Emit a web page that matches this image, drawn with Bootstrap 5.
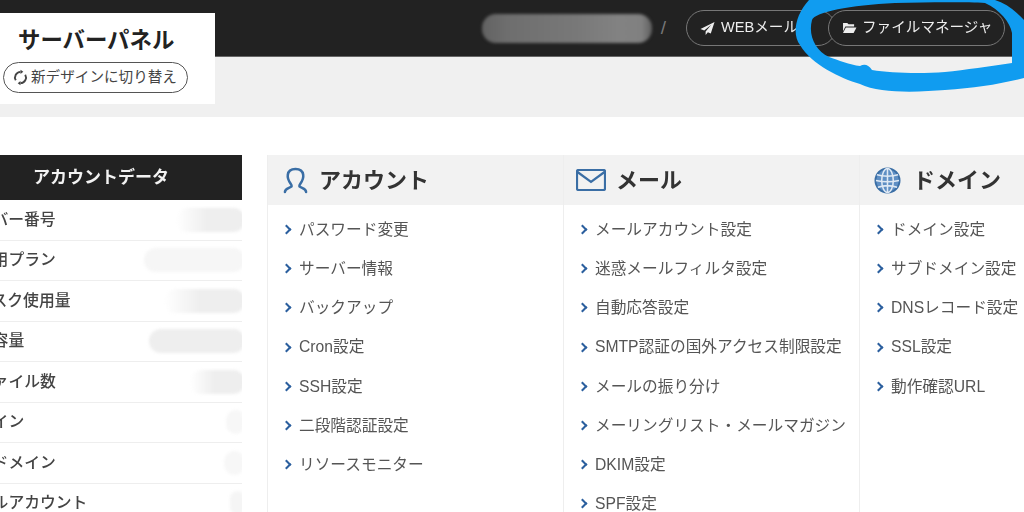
<!DOCTYPE html>
<html lang="ja"><head><meta charset="utf-8">
<link rel="stylesheet" href="https://cdn.jsdelivr.net/npm/bootstrap@5.3.0/dist/css/bootstrap.min.css">
<style>
html,body{height:512px;overflow:hidden}
body{font-family:"Liberation Sans","Noto Sans CJK JP",sans-serif;background:#fff;color:#444;position:relative;width:1024px;filter:blur(.35px)}
.topbar{height:57px;background:#222;border-bottom:1px solid #666;padding-right:19px}
.band{height:60px;background:#f0f0f0}
.logobox{position:absolute;left:0;top:13px;width:215px;height:91px;background:#fff;padding:13px 0 0 18px}
.logotitle{font-size:22.4px;font-weight:700;color:#222;line-height:30px}
.switchbtn{display:flex;align-items:center;gap:2px;position:absolute;left:3px;top:49px;width:185px;height:31px;border:1.5px solid #555;border-radius:16px;font-size:14.6px;color:#444;padding-left:8px;white-space:nowrap}
.smudge{width:170px;height:29px;border-radius:14px;background:linear-gradient(90deg,#626262,#6e6e6e 15%,#787878 55%,#828282 80%,#808080 94%,#5f5f5f);filter:blur(1.5px);margin-right:1px}
.slash{color:#777;font-size:19px;margin:0 20px 0 8px}
.pillbtn{display:inline-flex;align-items:center;gap:5px;height:36px;border:1px solid #777;border-radius:18px;color:#eee;font-size:14.6px;padding:0 13px;white-space:nowrap}
.pillbtn svg,.switchbtn svg,.panehead svg{flex:none}
.pillone{width:150px;margin-right:-8px;gap:6px}
.pilltwo{width:177px;position:relative;z-index:1;background:#222}
.main{padding-top:38px}
.side{width:242px;flex:none;overflow:hidden}
.sidehead{height:45px;background:#222;color:#f2f2f2;font-weight:700;font-size:17px;display:flex;align-items:center;justify-content:center;padding:1px 40px 0 0}
.siderow{height:40.5px;border-bottom:1px solid #eee;display:flex;align-items:center;justify-content:space-between;font-size:15.8px;font-weight:500;color:#444;white-space:nowrap}
.siderow>span{margin-left:-39px;flex:none}
.blurval{height:24px;border-radius:12px 10px 10px 12px;background:linear-gradient(90deg,#fff,#eee 45%);filter:blur(1.5px);margin-right:-2px}
.val1{width:68px}.val2{width:100px;background:#f6f6f6}.val3{width:80px}.val4{width:95px;background:#eee}.val5{width:54px}.val6{width:18px;background:#f7f7f7}.val7{width:20px;background:#f7f7f7}.val8{width:14px;background:#f5f5f5}
.panels{margin-left:25px;flex:1;min-width:0}
.pane{width:296px;flex:none;border-left:1px solid #eee}
.panehead{height:50px;background:#f2f2f2;display:flex;align-items:center;gap:11px;font-size:22px;font-weight:700;color:#333;padding-left:15px}
.headmail{padding-left:12px;gap:10px}.headdomain{padding-left:14px;gap:12px}
.panelist{list-style:none;margin:0;padding:5px 0 0 15px}
.panelist li{height:39.2px;display:flex;align-items:center;gap:9px;font-size:15.7px;color:#555;white-space:nowrap}
.panelist li::before{content:"";flex:none;width:7px;height:7px;border-top:2.4px solid #2b5f9e;border-right:2.4px solid #2b5f9e;transform:rotate(45deg)}
.ring{position:absolute;left:0;top:0;width:1024px;height:512px;pointer-events:none;z-index:5}
</style></head><body>
<div class="topbar d-flex align-items-center justify-content-end">
 <div class="smudge"></div><span class="slash">/</span>
 <a class="pillbtn pillone text-decoration-none"><svg width="15" height="15" viewBox="0 0 16 15"><path d="M15.500 .5 .5 8l4 1.600L12 3.500 6 10.600V14.500l2.400-3 3.100 1.300z" fill="#eee"/></svg>WEBメール</a>
 <a class="pillbtn pilltwo text-decoration-none"><svg width="15" height="12" viewBox="0 0 16 13"><path d="M1 1h4.500l1.500 1.500h6V5H3.500L1 10z" fill="#eee"/><path d="M4 6h11.500L12.500 12H1z" fill="#eee"/></svg>ファイルマネージャ</a>
</div>
<div class="band"></div>
<div class="logobox">
 <div class="logotitle">サーバーパネル</div>
 <div class="switchbtn"><svg width="17" height="17" viewBox="0 0 18 18" fill="none" stroke="#444" stroke-width="2"><path d="M4 12A6 6 0 0 1 9 3"/><path d="M14 6a6 6 0 0 1-5 9"/><path d="M9 .8v4.600L12 3z" fill="#444" stroke="none"/><path d="M9 17.200v-4.600L6 15z" fill="#444" stroke="none"/></svg>新デザインに切り替え</div>
</div>
<div class="main d-flex">
 <div class="side">
  <div class="sidehead">アカウントデータ</div>
  <div class="siderow"><span>サーバー番号</span><div class="blurval val1"></div></div>
  <div class="siderow"><span>ご利用プラン</span><div class="blurval val2"></div></div>
  <div class="siderow"><span>ディスク使用量</span><div class="blurval val3"></div></div>
  <div class="siderow"><span>空き容量</span><div class="blurval val4"></div></div>
  <div class="siderow"><span>総ファイル数</span><div class="blurval val5"></div></div>
  <div class="siderow"><span>ドメイン</span><div class="blurval val6"></div></div>
  <div class="siderow"><span>サブドメイン</span><div class="blurval val7"></div></div>
  <div class="siderow"><span>メールアカウント</span><div class="blurval val8"></div></div>
 </div>
 <div class="panels d-flex overflow-hidden">
  <div class="pane">
   <div class="panehead"><svg width="25" height="27" viewBox="0 0 26 28" fill="none" stroke="#3a6ea5" stroke-width="2.600" stroke-linecap="round"><path d="M2 26c0-4 5-4 7-6 1-2-5-5-4-12 .5-4 4-6 8-6s7.500 2 8 6c1 7-5 10-4 12 2 2 7 2 7 6"/></svg>アカウント</div>
   <ul class="panelist"><li>パスワード変更</li><li>サーバー情報</li><li>バックアップ</li><li>Cron設定</li><li>SSH設定</li><li>二段階認証設定</li><li>リソースモニター</li></ul>
  </div>
  <div class="pane">
   <div class="panehead headmail"><svg width="30" height="22" viewBox="0 0 30 22" fill="none" stroke="#3a6ea5" stroke-width="2.200"><rect x="1" y="1" width="28" height="20" rx="1.500"/><path d="M1.500 3 15 13 28.500 3"/></svg>メール</div>
   <ul class="panelist"><li>メールアカウント設定</li><li>迷惑メールフィルタ設定</li><li>自動応答設定</li><li>SMTP認証の国外アクセス制限設定</li><li>メールの振り分け</li><li>メーリングリスト・メールマガジン</li><li>DKIM設定</li><li>SPF設定</li></ul>
  </div>
  <div class="pane">
   <div class="panehead headdomain"><svg width="27" height="27" viewBox="0 0 28 28" fill="none" stroke="#3a6ea5" stroke-width="1.600"><circle cx="14" cy="14" r="12.500" fill="#5f8fc4" stroke-width="2"/><ellipse cx="14" cy="14" rx="6" ry="12.500" stroke="#dfe9f4"/><path d="M3 8c6 2 16 2 22 0M2 14c7 1.500 17 1.500 24 0M4 21c6-2 14-2 20 0M14 2v24" stroke="#dfe9f4"/></svg>ドメイン</div>
   <ul class="panelist"><li>ドメイン設定</li><li>サブドメイン設定</li><li>DNSレコード設定</li><li>SSL設定</li><li>動作確認URL</li></ul>
  </div>
 </div>
</div>
<svg class="ring" viewBox="0 0 1024 512"><path fill-rule="evenodd" fill="#109cf0" d="M809 0C795 15 792 35 800 45 812 65 840 78 860 84 880 94 920 92 945 90 975 88 1000 84 1024 78V20C1015 10 1005 3 995 0ZM812 20C815 12 850 5 895 3 930 2 970 2 985 3 1000 10 1010 22 1012 33V63C990 66 965 70 945 72 920 74 890 73 872 70 868 64 864 64 860 66 850 65 838 60 829 57 815 50 808 35 812 20Z"/></svg>
</body></html>
